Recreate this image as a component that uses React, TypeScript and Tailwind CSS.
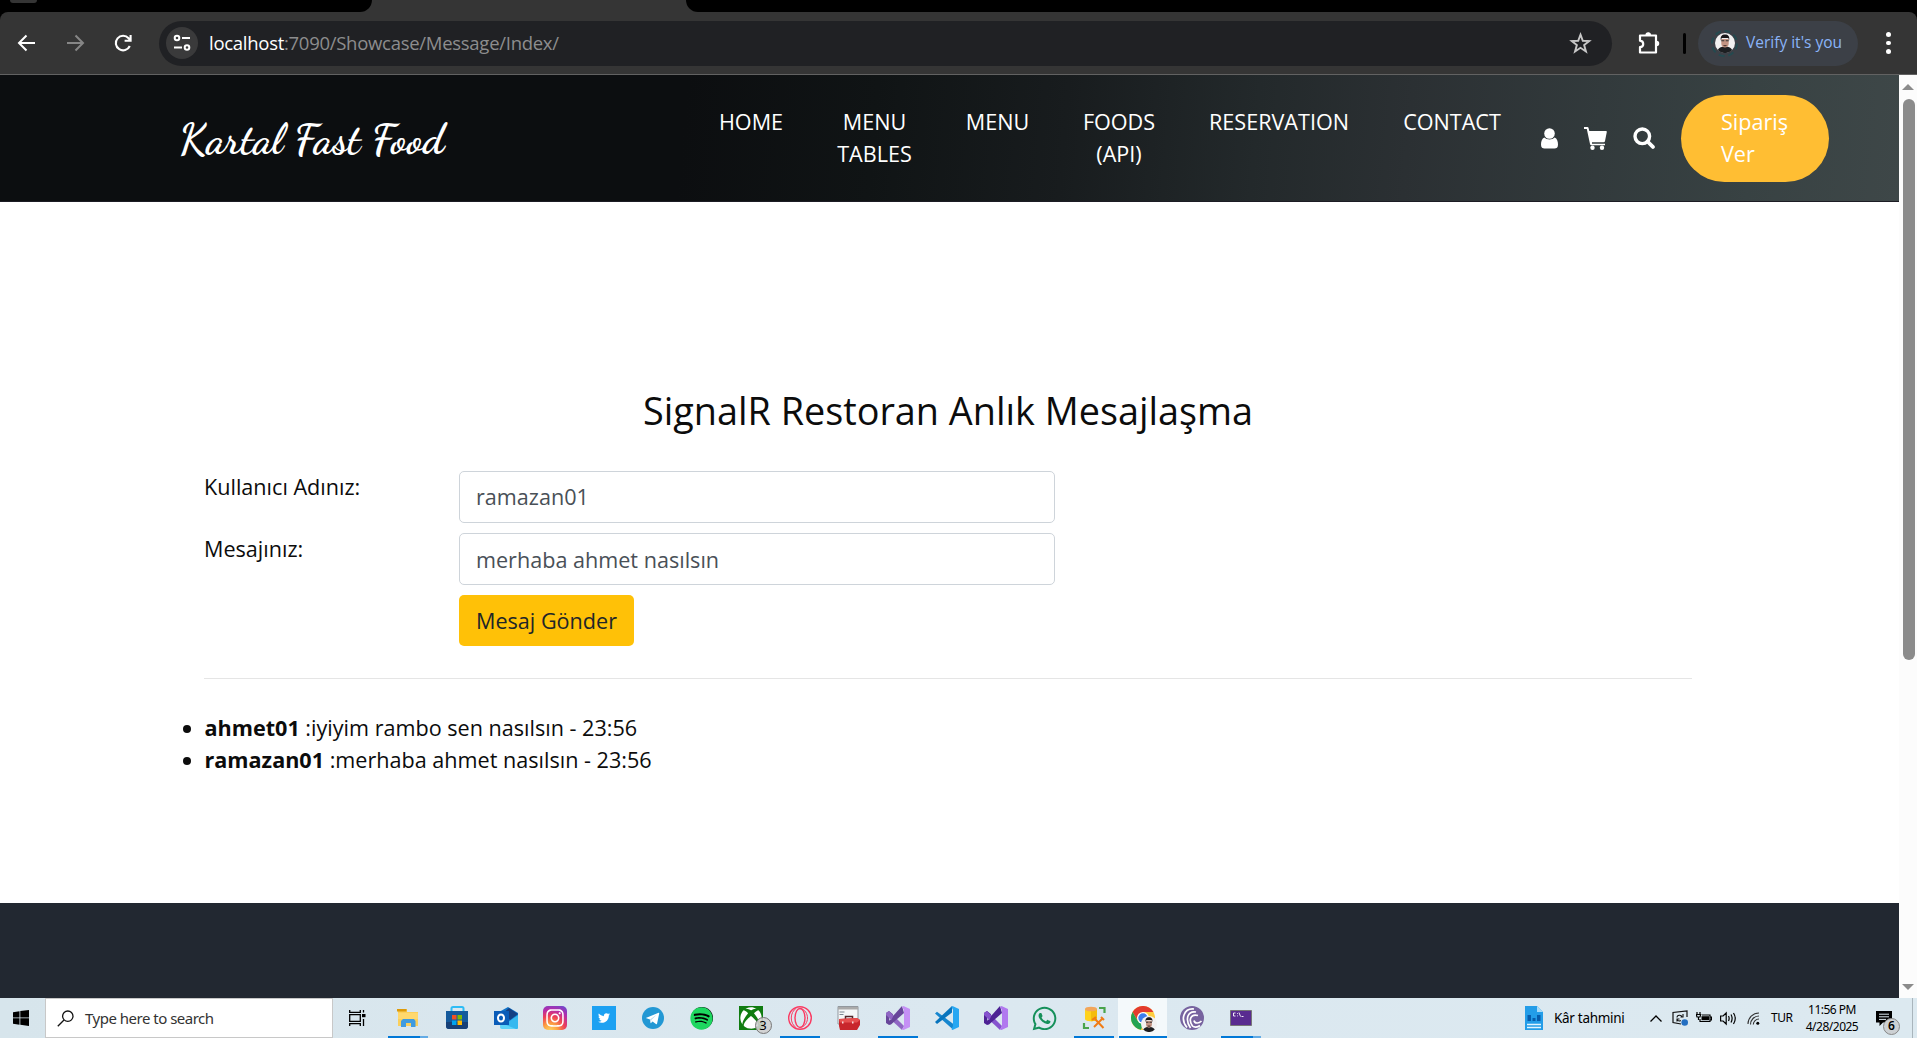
import React from "react";
import { FaInstagram, FaTwitter, FaSpotify, FaXbox, FaWhatsapp } from "react-icons/fa";

const NAV: { lines: string[]; width: string }[] = [
  { lines: ["HOME"], width: "w-[64px]" },
  { lines: ["MENU", "TABLES"], width: "w-[75px]" },
  { lines: ["MENU"], width: "w-[63px]" },
  { lines: ["FOODS", "(API)"], width: "w-[72px]" },
  { lines: ["RESERVATION"], width: "w-[140px]" },
  { lines: ["CONTACT"], width: "w-[98px]" },
];

function Chrome() {
  return (
    <div className="flex h-[75px] flex-col bg-[#353535]">
      <div className="flex h-3 justify-between bg-[#353535]">
        <div className="w-[372px] rounded-br-[12px] bg-black pl-[10px]">
          <div className="h-[3px] w-[27px] rounded-b-full bg-[#353535]" />
        </div>
        <div className="w-[1231px] rounded-bl-[12px] bg-black" />
      </div>
      <div className="bg-black">
        <div className="flex h-[62px] items-center rounded-t-[8px] bg-[#353535]">
          <svg className="ml-[14px] size-6 shrink-0" viewBox="0 0 24 24" fill="none" stroke="#fff" strokeWidth="2">
            <path d="M21 12H5M12.5 4.5 5 12l7.500 7.500" />
          </svg>
          <svg className="ml-[25px] size-6 shrink-0" viewBox="0 0 24 24" fill="none" stroke="#868686" strokeWidth="2">
            <path d="M4 12h16M12.500 4.500 20 12l-7.500 7.500" />
          </svg>
          <svg className="ml-6 size-6 shrink-0" viewBox="0 0 24 24" fill="none" stroke="#fff" strokeWidth="2.100">
            <path d="M18.800 15A7.300 7.300 0 1 1 17.600 7.200L19.600 9.300M19.600 4v5.800h-6" />
          </svg>
          <div className="ml-[24px] flex h-[45px] w-[1453px] items-center rounded-full bg-[#202124]">
            <div className="ml-[7px] flex size-8 items-center justify-center rounded-full bg-[#3a3a3b]">
              <svg className="size-[18px]" viewBox="0 0 18 18" fill="none" stroke="#fff" strokeWidth="2">
                <circle cx="4" cy="4" r="2.300" />
                <path d="M9 4h8M1 13.500h8" />
                <circle cx="14" cy="13.500" r="2.300" />
              </svg>
            </div>
            <div className="ml-[11px] whitespace-nowrap font-['Open_Sans',sans-serif] text-[18.500px] tracking-[-0.280px] text-[#8d8d8e]">
              <span className="text-white">localhost</span>:7090/Showcase/Message/Index/
            </div>
            <svg className="mr-[20px] ml-auto size-[23px]" viewBox="0 0 24 24" fill="none" stroke="#c7c7c7" strokeWidth="2">
              <path d="m12 2.800 2.400 6.300 6.700.3-5.300 4.200 1.900 6.700-5.700-3.800-5.700 3.800 1.900-6.700-5.300-4.200 6.700-.3z" />
            </svg>
          </div>
          <svg className="ml-[25px] size-6 shrink-0" viewBox="0 0 24 24" fill="none" stroke="#fff" strokeWidth="2.200" strokeLinejoin="round">
            <path d="M3 4.500h16v17H3v-5.300c4.300-.5 4.300-6 0-6.500z" />
            <path d="M9 4a2.300 2.300 0 0 1 4.600 0zM19.500 10.300a2.300 2.300 0 0 1 0 4.600z" fill="#fff" stroke="none" />
            <path d="M9.200 4a2 2 0 0 1 4 0M19.500 10.500a2 2 0 0 1 0 4" strokeWidth="1.500" />
          </svg>
          <div className="ml-[22px] h-[21px] w-[3px] rounded bg-black" />
          <div className="ml-[12px] flex h-[45px] w-[160px] items-center rounded-full bg-[#3c4047]">
            <Avatar />
            <span className="ml-[8px] whitespace-nowrap font-['Open_Sans',sans-serif] text-[15.500px] text-[#8ab4f8]">Verify it's you</span>
          </div>
          <div className="ml-[28px] flex flex-col gap-[4px]">
            <i className="size-[4.500px] rounded-full bg-white" />
            <i className="size-[4.500px] rounded-full bg-white" />
            <i className="size-[4.500px] rounded-full bg-white" />
          </div>
        </div>
        <div className="h-px bg-[#626262]" />
      </div>
    </div>
  );
}

function Face({ className }: { className: string }) {
  return (
    <svg className={className} viewBox="0 0 20 20">
      <circle cx="10" cy="10" r="10" fill="#f2f1f1" />
      <path d="M2.800 17c1.200-2.600 3.400-3 5-3.300h4.400c1.600.3 3.800.7 5 3.300A10 10 0 0 1 2.800 17z" fill="#1d1f22" />
      <path d="M6.300 6v5c.4 4.800 7 4.800 7.400 0V6z" fill="#c39483" />
      <path d="M5.900 7.500C5 3.300 7 1.500 10 1.500s5 1.800 4.100 6l-.8-2.500H6.700z" fill="#181719" />
      <path d="M6.300 7.300h3v1h-3zM10.700 7.300h3v1h-3z" fill="#333" />
      <path d="M8 12h4l-1 1.300H9z" fill="#56403a" />
    </svg>
  );
}

function Avatar() {
  return (
    <div className="ml-[13px] flex size-[27px] items-center justify-center rounded-full border-2 border-dashed border-[#244a50]">
      <Face className="size-[20px]" />
    </div>
  );
}

function SiteHeader() {
  return (
    <header className="flex h-[127px] items-start border-b border-[#1c1c24] bg-[linear-gradient(95deg,#0c0e10_0%,#0c0e10_36%,#101415_46%,#181c1e_56%,#23292b_66%,#2b3033_74%,#323a3c_84%,#384243_92%,#3e4748_100%)]">
      <div className="ml-[179px] mt-[34px] w-[540px] whitespace-nowrap font-['Dancing_Script','Liberation_Serif',cursive] text-[43px] leading-[60px] font-bold text-white">
        Kartal Fast Food
      </div>
      <nav className="mt-[31px] flex gap-[54px] text-[21.600px] leading-8 text-white">
        {NAV.map((n, i) => (
          <a key={i} className={`${n.width} flex flex-col items-center whitespace-nowrap`}>
            {n.lines.map((l) => (
              <span key={l}>{l}</span>
            ))}
          </a>
        ))}
      </nav>
      <div className="ml-[40px] mt-[51px] flex h-6 items-center text-white">
        <svg className="h-[21px] w-[17px]" viewBox="0 0 17 21" fill="#fff">
          <circle cx="8.500" cy="5.500" r="5.300" />
          <path d="M3.300 9.500C1 10.500 0 13.500 0 16.500 0 19.500 1.500 20.500 3.500 20.500h10c2 0 3.500-1 3.500-4 0-3-1-6-3.300-7-2.600 2.500-7.800 2.500-10.400 0z" />
        </svg>
        <svg className="ml-[26px] size-[23px]" viewBox="0 0 23 23" fill="#fff">
          <path d="M0 0h3.500q.8 0 1 .8L5.300 4H22q1 0 .8 1l-1.800 9q-.2 1.200-1.400 1.200H8v1.600h13v1.400H7.500Q6.200 18.200 6 17L2.800 2H0z" />
          <circle cx="8.500" cy="20.700" r="2.200" />
          <circle cx="18" cy="20.700" r="2.200" />
        </svg>
        <svg className="ml-[26px] size-[22px]" viewBox="0 0 22 22" fill="none" stroke="#fff">
          <circle cx="9.300" cy="9.300" r="7.300" strokeWidth="3.400" />
          <path d="m14.500 14.500 5.400 5.400" strokeWidth="3.800" strokeLinecap="round" />
        </svg>
      </div>
      <button className="ml-[26px] mt-5 flex h-[87px] w-[148px] flex-col rounded-full bg-[#ffbe33] pt-[11px] pl-10 text-left text-[21.600px] leading-8 text-white">
        <span>Sipariş</span>
        <span>Ver</span>
      </button>
    </header>
  );
}

function Field({ label, value, pad }: { label: string; value: string; pad: string }) {
  return (
    <div className="flex h-[62px]">
      <label className="w-[255px] text-[21.600px] leading-8">{label}</label>
      <input
        readOnly
        value={value}
        className={`h-[52px] w-[596px] rounded-[5px] border border-[#ced4da] px-4 text-[21.600px] text-[#495057] outline-none ${pad}`}
      />
    </div>
  );
}

function Main() {
  return (
    <main className="h-[701px] bg-white text-[#0c0c0c]">
      <h2 className="ml-[184px] w-[1528px] pt-[184px] text-center text-[37.800px] leading-[50px]">SignalR Restoran Anlık Mesajlaşma</h2>
      <div className="ml-[204px] mt-[35px] w-[1488px]">
        <Field label="Kullanıcı Adınız:" value="ramazan01" pad="pb-[2px]" />
        <Field label="Mesajınız:" value="merhaba ahmet nasılsın" pad="pb-0" />
        <div className="flex pl-[255px]">
          <button className="h-[51px] w-[175px] rounded-[5px] bg-[#ffc107] pt-[2px] text-[21.600px] text-[#212529]">Mesaj Gönder</button>
        </div>
        <div className="mt-8 h-px bg-[#e5e5e5]" />
      </div>
      <ul className="ml-[204.500px] mt-[33px] list-disc text-[21.600px] leading-8">
        <li><b className="font-bold">ahmet01</b> :iyiyim rambo sen nasılsın - 23:56</li>
        <li><b className="font-bold">ramazan01</b> :merhaba ahmet nasılsın - 23:56</li>
      </ul>
    </main>
  );
}

function Scrollbar() {
  return (
    <div className="flex w-[18px] flex-col items-center bg-[#fcfcfc] pt-[9px] pb-2">
      <svg className="h-[6px] w-[12px]" viewBox="0 0 12 6"><path d="M6 0l6 6H0z" fill="#8b8b8b" /></svg>
      <div className="mt-[9px] ml-px h-[561px] w-3 rounded-full bg-[#8b8b8b]" />
      <svg className="mt-auto h-[6px] w-[12px]" viewBox="0 0 12 6"><path d="M0 0h12L6 6z" fill="#8b8b8b" /></svg>
    </div>
  );
}

function VisualStudio({ a, b, c }: { a: string; b: string; c: string }) {
  return (
    <svg className="size-6" viewBox="0 0 24 24">
      <path d="M0 7 3 5l4 3.300v7.400L3 19l-3-2zM3.300 9.300v5.400L6 12z" fill={a} fillRule="evenodd" />
      <path d="M3 5l15 15-2 4L0 9V7z" fill={b} />
      <path d="M16 0 7.500 9.500 3 19l2-.5L18 7z" fill={a} />
      <path d="M17.500 0 24 3v18l-6.500 3-1.500-.8 2-3V4l-2-3z" fill={c} />
    </svg>
  );
}

const ICONS: { icon: React.ReactNode; bar?: string; active?: boolean }[] = [
  {
    bar: "split",
    icon: (
      <svg className="size-[22px]" viewBox="0 0 22 22">
        <path d="M1 2h9v3h11v14H1z" fill="#fbcf5b" />
        <path d="M0 2h9.500v2.500H0z" fill="#dd9a0a" />
        <path d="M1 6h20v6H1z" fill="#ffd86e" />
        <path d="M4 20v-6l2-2h11l1.500 2v6H14v-4H9v4z" fill="#3f9be0" />
      </svg>
    ),
  },
  {
    icon: (
      <svg className="size-6" viewBox="0 0 24 24">
        <path d="M6.500 6V2.500Q6.500 1 8 1h9q1.500 0 1.500 1.500V6" fill="none" stroke="#2dbcf5" strokeWidth="2" />
        <path d="M1 5h22v15q0 3-3 3H4q-3 0-3-3z" fill="#145a9c" />
        <path d="M1 16h22v4q0 3-3 3H4q-3 0-3-3z" fill="#174077" />
        <path d="M7 9h4.500v4.500H7z" fill="#f25022" /><path d="M12.500 9H17v4.500h-4.500z" fill="#7fba00" />
        <path d="M7 14.500h4.500V19H7z" fill="#00a4ef" /><path d="M12.500 14.500H17V19h-4.500z" fill="#ffb900" />
      </svg>
    ),
  },
  {
    icon: (
      <svg className="size-6" viewBox="0 0 24 24">
        <path d="M5 6 14 1l10 6v15H7z" fill="#1173c8" />
        <path d="M9 7 15 2l9 6-8 6z" fill="#123f83" />
        <path d="M24 9v13q0 1-1 1H8l6-7z" fill="#35b8ef" />
        <path d="M7 17l15 6H8q-2 0-2-2z" fill="#5cd3fa" />
        <path d="M0 5h15v14H0z" fill="#0a5cb8" />
        <ellipse cx="7" cy="12" rx="3" ry="3.600" fill="none" stroke="#fff" strokeWidth="2" />
      </svg>
    ),
  },
  {
    icon: (
      <div className="flex size-6 items-center justify-center rounded-[5px] bg-[radial-gradient(circle_at_30%_105%,#fed766_0%,#fca142_25%,#ee3f55_50%,#b42cab_72%,#5b50d5_100%)] text-white">
        <FaInstagram className="size-[20px]" />
      </div>
    ),
  },
  {
    icon: (
      <div className="flex size-6 items-center justify-center bg-[#1da1f2] text-white">
        <FaTwitter className="size-[12px]" />
      </div>
    ),
  },
  {
    icon: (
      <svg className="size-[22px]" viewBox="0 0 22 22">
        <circle cx="11" cy="11" r="11" fill="#2398d4" />
        <path d="m3.800 11 12.800-5.300q.9-.2.600.9l-2.100 10q-.3 1-1.200.4l-3.300-2.500-1.600 1.600q-.4.300-.5-.3L8 12.400z" fill="#fff" />
        <path d="m8 12.400 6.600-4.600-5.300 5.300-.3 2.700z" fill="#b9d9ec" />
      </svg>
    ),
  },
  {
    icon: (
      <div className="flex size-[22px] items-center justify-center rounded-full bg-black">
        <FaSpotify className="size-[23px] shrink-0 text-[#1ed760]" />
      </div>
    ),
  },
  {
    icon: (
      <div className="relative flex size-6 items-center justify-center bg-[#107c10] text-white">
        <FaXbox className="size-[22px]" />
        <span className="absolute top-[11px] left-[16px] flex size-[17px] items-center justify-center rounded-full border border-[#777] bg-[#d0d0d0]/90 text-[13px] text-black">3</span>
      </div>
    ),
  },
  {
    bar: "full",
    icon: (
      <svg className="size-6" viewBox="0 0 24 24" fill="none" stroke="#fa3a61">
        <circle cx="12" cy="12" r="11.300" strokeWidth="1.400" />
        <ellipse cx="12" cy="12" rx="5" ry="9.500" strokeWidth="1.400" />
        <path d="M12 2.500C17 3 19.500 8 19.500 12s-2.500 9-7.500 9.500M8.500 2C1.500 6.500 1.500 17.500 8.500 22" strokeWidth="1" />
      </svg>
    ),
  },
  {
    icon: (
      <svg className="size-6" viewBox="0 0 24 24">
        <path d="M1 .5h20V18H1z" fill="#f5f7f8" stroke="#92989e" />
        <path d="M1 1h20v2.500H1z" fill="#aaa" /><path d="M2.500 6h5M2.500 8.500h4" stroke="#7b8790" />
        <path d="M8.500 13v-2.500h7V13" fill="none" stroke="#52272b" strokeWidth="1.500" />
        <path d="M2 13l18-1 3 2v5l-3 5H3l-1-4z" fill="#c8262c" />
        <path d="M2 13l18-1 3 2-3 2.500H3z" fill="#e65050" /><path d="M5 15.500h1.500v2H5zM15 15.500h1.500v2H15z" fill="#f5d9d9" />
      </svg>
    ),
  },
  { bar: "full", icon: <VisualStudio a="#68469a" b="#9067c4" c="#c590f5" /> },
  {
    icon: (
      <svg className="size-6" viewBox="0 0 24 24">
        <path d="M0 7.500 2 5.700l16 12v5.800z" fill="#1686cf" />
        <path d="M0 16 17 0v6.500L2 18z" fill="#0874bd" />
        <path d="M17.500 0 24 3v18l-6.500 3-1-.7L18 20V4l-1.500-3z" fill="#27a7f2" />
      </svg>
    ),
  },
  { icon: <VisualStudio a="#4d2294" b="#8653ce" c="#b179ef" /> },
  { icon: <FaWhatsapp className="size-[27px] text-[#15905a]" /> },
  {
    bar: "full",
    icon: (
      <svg className="size-6" viewBox="0 0 24 24">
        <path d="M3 3v10c0 3 12 3 12 0V3z" fill="#ffd21c" /><path d="M9 3h6v10q0 2-6 2.300z" fill="#f4bc0e" />
        <ellipse cx="9" cy="3" rx="6" ry="2.300" fill="#f2a65a" />
        <path d="M17 2h5.500v5M2 17v5h5" fill="none" stroke="#49a44b" strokeWidth="2.200" />
        <path d="m12 21 9-9M13 13l8.500 9M10 14l4-3M19 11l3 3" stroke="#f07c16" strokeWidth="2" fill="none" />
      </svg>
    ),
  },
  {
    bar: "wide",
    active: true,
    icon: (
      <div className="relative size-6">
        <svg className="size-6" viewBox="0 0 24 24">
          <circle cx="12" cy="12" r="12" fill="#ffcd40" />
          <path d="M1.600 6A12 12 0 0 1 22.400 6H12L7 15z" fill="#e33b2e" />
          <path d="M1.600 6 6.800 15l5.200 3-2 5.800A12 12 0 0 1 1.600 6z" fill="#24a353" />
          <circle cx="12" cy="12" r="6" fill="#fff" /><circle cx="12" cy="12" r="4.700" fill="#3b7ded" />
        </svg>
        <div className="absolute top-[10px] left-[10px]"><Face className="size-4" /></div>
      </div>
    ),
  },
  {
    icon: (
      <svg className="size-6" viewBox="0 0 24 24" fill="none" stroke="#fff" strokeWidth="1.700">
        <circle cx="12" cy="12" r="12" fill="#77639f" stroke="none" />
        <path d="M14 3C4 2 0 13 7 21.500M16 6C8 4.500 4.500 13 10.500 22M18 9.500c-7-2-10 4-5.500 10.500 1.500 1.500 5 1.500 7.500-.5M21.500 15c-3 3-7 2.500-7.500-.5" />
      </svg>
    ),
  },
  {
    bar: "split",
    icon: (
      <svg className="h-4 w-[22px]" viewBox="0 0 22 16">
        <path d="M.5.500h21v15H.5z" fill="#592b90" stroke="#777" />
        <path d="M5.500 3H3.500v3h2M7.500 3v.8M7.500 5.500v.8M9 2.500l1.500 4M11.500 6.500h2" stroke="#fff" strokeWidth=".9" fill="none" />
      </svg>
    ),
  },
];

function Taskbar() {
  return (
    <footer className="flex h-10 items-center bg-[linear-gradient(90deg,#d7e5ec,#dbe8f0_50%,#dce9f0)] font-['Noto_Sans','Open_Sans',sans-serif] text-black">
      <svg className="ml-[13px] size-4" viewBox="0 0 16 16"><path d="M0 2.200 6.500 1.200v6.300H0zM7.300 1.100 16 0v7.500H7.300zM0 8.300h6.500v6.400L0 13.800zM7.300 8.300H16V16l-8.700-1.200z" /></svg>
      <div className="ml-4 flex h-10 w-[288px] items-center border border-[#c8c8c8] bg-white">
        <svg className="ml-[11px] size-[17px]" viewBox="0 0 17 17" fill="none" stroke="#111" strokeWidth="1.300"><circle cx="10.800" cy="6.200" r="5.200" /><path d="M7 10 .8 16.200" /></svg>
        <span className="ml-[11px] text-[15px] tracking-[-0.500px] whitespace-nowrap text-[#333]">Type here to search</span>
      </div>
      <svg className="ml-4 mr-[17px] h-4 w-[17px]" viewBox="0 0 17 16" fill="none" stroke="#000" strokeWidth="1.300">
        <path d="M.7 0v2.300h10.600V0M.7 16v-2.300h10.600V16M.7 4.700h10.600v6.600H.7zM14.500 0v2.500M14.500 9v7" />
        <path d="M13 4h3.500v3.200H13z" fill="#000" stroke="none" />
      </svg>
      <div className="flex">
        {ICONS.map((it, i) => (
          <div key={i} className={`relative flex h-10 w-[49px] items-center justify-center ${it.active ? "bg-[#f4f9fb]" : ""}`}>
            {it.icon}
            {it.bar === "full" && <i className="absolute bottom-0 h-[2px] w-10 bg-[#0078d7]" />}
            {it.bar === "wide" && <i className="absolute bottom-0 h-[2px] w-12 bg-[#0078d7]" />}
            {it.bar === "split" && (
              <i className="absolute bottom-0 flex h-[2px] w-10 bg-[#62abe5]"><b className="h-[2px] w-8 bg-[#0078d7]" /></i>
            )}
          </div>
        ))}
      </div>
      <div className="ml-auto flex h-10 items-center">
        <svg className="h-6 w-[18px]" viewBox="0 0 18 24">
          <path d="M0 0h12l6 6v18H0z" fill="#239de8" /><path d="M12 0l6 6h-6z" fill="#a9dbf8" />
          <path d="M2.500 9H6v6H2.500zM7.500 12h3v3h-3zM12 9h3.500v6H12z" fill="#075cab" />
          <path d="M2 18.500h14M2 21.500h14" stroke="#e3f5ff" strokeWidth="1.400" />
        </svg>
        <span className="ml-[11px] w-[72px] text-[13.500px] tracking-[-0.300px] whitespace-nowrap">Kâr tahmini</span>
        <svg className="ml-6 h-[7px] w-3" viewBox="0 0 12 7" fill="none" stroke="#000" strokeWidth="1.300"><path d="m.5 6.500 5.500-5.500 5.500 5.500" /></svg>
        <svg className="ml-[10px] size-4" viewBox="0 0 16 16" fill="none" stroke="#111" strokeWidth="1.200">
          <path d="M15 7V1L1 2.500v10L9 14" /><path d="M5 7.500c0-3 4.500-3 5-.5M11 4v3H8.500M5 11.500V9h2.500M5 9.500c1 1.600 2.500 1.800 3.800 1" strokeWidth="1.100" /><circle cx="12.700" cy="12.500" r="3.300" fill="#246fc1" stroke="none" />
        </svg>
        <svg className="ml-2 h-[14px] w-4" viewBox="0 0 16 14" fill="none" stroke="#000" strokeWidth="1.200">
          <path d="M6 4h8v6.500H4V8M14.500 6h1v3h-1" /><path d="M5.500 5.200H13v4H5.500z" fill="#000" stroke="none" /><path d="M1 1v2M4 1v2M.3 3.500h4.400L4 6H1zM2.500 6v3" />
        </svg>
        <svg className="ml-2 h-[15px] w-[17px]" viewBox="0 0 17 15" fill="none" stroke="#000" strokeWidth="1.200">
          <path d="M.6 5h2.500L6.200 2v11L3.100 10H.6z" /><path d="M8.500 5q1.300 2.500 0 5M11 3.500q2.200 4 0 8" /><path d="M13.500 2q3.500 5.500 0 11" />
        </svg>
        <svg className="ml-[10px] size-[13px]" viewBox="0 0 13 13" fill="none" stroke="#333" strokeWidth="1.100">
          <path d="M1 12A11 11 0 0 1 12 1M3.500 12.500A8.500 8.500 0 0 1 12 4M6.300 12.500A5.700 5.700 0 0 1 12 7" /><circle cx="10.800" cy="11.200" r="1.500" fill="#000" stroke="none" />
        </svg>
        <span className="ml-[11px] w-[24px] text-[12px] tracking-[-0.500px]">TUR</span>
        <div className="ml-[9px] flex w-[56px] flex-col items-center text-[12px] leading-[17px] tracking-[-0.500px] whitespace-nowrap">
          <span>11:56 PM</span>
          <span>4/28/2025</span>
        </div>
        <div className="relative ml-[16px] size-[17px]">
          <svg className="size-[17px]" viewBox="0 0 17 17"><path d="M0 1h16v11.500H7L3.500 16v-3.500H0z" /><path d="M3 4.200h10M3 6.800h10M3 9.400h7" stroke="#dce9f0" /></svg>
          <span className="absolute top-[8px] left-[7px] flex size-[17px] items-center justify-center rounded-full border border-[#888] bg-[#ccd0d3] text-[12px] font-semibold">6</span>
        </div>
        <i className="ml-[19px] mr-1 h-10 w-px bg-[#a9b5bc]" />
      </div>
    </footer>
  );
}

export default function App() {
  return (
    <div className="flex h-[1038px] w-[1917px] flex-col overflow-hidden bg-white font-['Open_Sans',sans-serif]">
      <Chrome />
      <div className="flex h-[923px]">
        <div className="w-[1899px]">
          <SiteHeader />
          <Main />
          <div className="h-[95px] bg-[#222831]" />
        </div>
        <Scrollbar />
      </div>
      <Taskbar />
    </div>
  );
}
